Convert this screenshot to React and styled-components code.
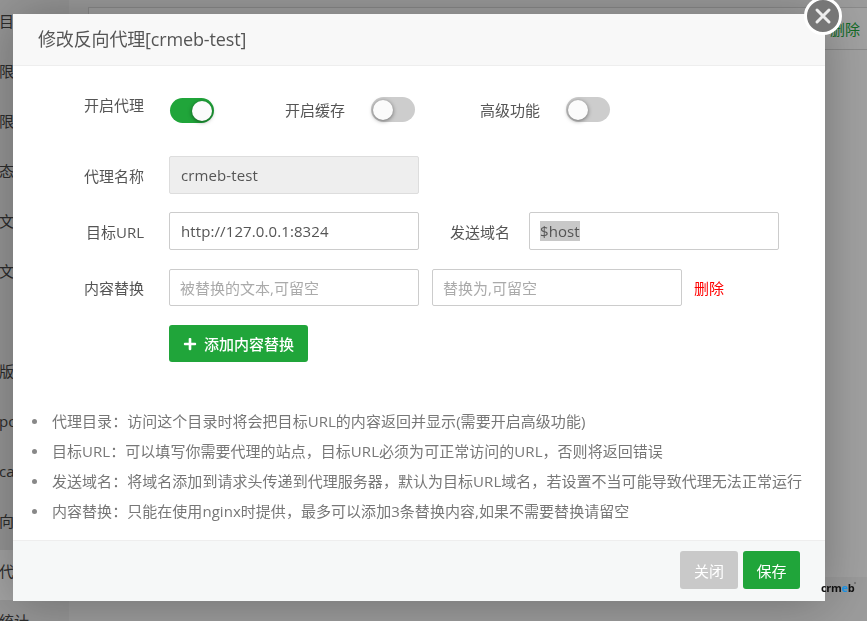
import React from "react";
import styled, { createGlobalStyle } from "styled-components";
import { FaPlus } from "react-icons/fa";

const sideItems = ["目录", "限制", "限制", "态", "文件", "文件", "", "版本", "po", "ca", "向", "代理", "统计"];

const tips = [
  "代理目录：访问这个目录时将会把目标URL的内容返回并显示(需要开启高级功能)",
  "目标URL：可以填写你需要代理的站点，目标URL必须为可正常访问的URL，否则将返回错误",
  "发送域名：将域名添加到请求头传递到代理服务器，默认为目标URL域名，若设置不当可能导致代理无法正常运行",
  "内容替换：只能在使用nginx时提供，最多可以添加3条替换内容,如果不需要替换请留空",
];

function App() {
  return (
    <>
      <GlobalStyle />
      <Page>
        <SideBar>
          {sideItems.map((item, i) => (
            <SideItem key={i} $active={i === 11}>{item}</SideItem>
          ))}
        </SideBar>
        <Main>
          <MainPanel>
            <PanelRow>
              <GreenLink>删除</GreenLink>
            </PanelRow>
          </MainPanel>
        </Main>
      </Page>
      <Shade />
      <Dialog>
        <Header>修改反向代理[crmeb-test]</Header>
        <CloseButton aria-label="关闭">
          <svg width="20" height="20" viewBox="0 0 20 20">
            <path d="M4 4 L16 16 M16 4 L4 16" stroke="#eeeeee" strokeWidth="3" strokeLinecap="round" />
          </svg>
        </CloseButton>
        <Body>
          <SwitchRow>
            <SwitchLabel>开启代理</SwitchLabel>
            <Switch $on />
            <SwitchLabel $gap={71}>开启缓存</SwitchLabel>
            <Switch />
            <SwitchLabel $gap={65}>高级功能</SwitchLabel>
            <Switch />
          </SwitchRow>
          <FormRow $top={33}>
            <FieldLabel>代理名称</FieldLabel>
            <Input $filled value="crmeb-test" readOnly disabled />
          </FormRow>
          <FormRow $top={18}>
            <FieldLabel>目标URL</FieldLabel>
            <Input $filled defaultValue="http://127.0.0.1:8324" />
            <FieldLabel $second>发送域名</FieldLabel>
            <FakeInput>
              <Selected>$host</Selected>
            </FakeInput>
          </FormRow>
          <FormRow $top={19} $short>
            <FieldLabel>内容替换</FieldLabel>
            <Input placeholder="被替换的文本,可留空" />
            <Input $gap placeholder="替换为,可留空" />
            <RemoveLink>删除</RemoveLink>
          </FormRow>
          <AddButton>
            <FaPlus size={14} />
            添加内容替换
          </AddButton>
          <TipList>
            {tips.map((tip) => (
              <li key={tip}>{tip}</li>
            ))}
          </TipList>
        </Body>
        <Footer>
          <FootButton $grey>关闭</FootButton>
          <FootButton>保存</FootButton>
        </Footer>
      </Dialog>
      <Watermark>
        cr<b>m</b><i>e</i>b
      </Watermark>
    </>
  );
}

const GlobalStyle = createGlobalStyle`
  html, body {
    margin: 0;
    padding: 0;
    height: 100%;
    overflow: hidden;
    background: #f2f2f2;
  }
  * {
    box-sizing: border-box;
  }
  body, input, button {
    font-family: "Open Sans", "Noto Sans CJK SC", sans-serif;
    font-size: 15px;
    color: #555;
  }
`;

const Page = styled.div`
  display: flex;
  height: 621px;
  overflow: hidden;
`;

const SideBar = styled.div`
  width: 69px;
  background: #e6e6e6;
`;

const SideItem = styled.div`
  height: 50px;
  line-height: 42px;
  text-indent: -1px;
  color: #444;
  white-space: nowrap;
  background: ${(p) => (p.$active ? "#fafafa" : "transparent")};
`;

const Main = styled.div`
  flex: 1;
  padding-left: 19px;
  background: #eeeeee;
`;

const MainPanel = styled.div`
  height: 570px;
  border-left: 1px solid #d4d4d4;
  background: #f8f8f8;
  margin-top: -1px;
`;

const PanelRow = styled.div`
  margin-top: 8px;
  height: 43px;
  border-top: 1px solid #d4d4d4;
  border-bottom: 1px solid #d4d4d4;
  display: flex;
  justify-content: flex-end;
  align-items: center;
  padding-right: 7px;
`;

const GreenLink = styled.span`
  color: #20a53a;
`;

const Shade = styled.div`
  position: fixed;
  inset: 0;
  background: rgba(0, 0, 0, 0.35);
`;

const Dialog = styled.div`
  position: fixed;
  left: 13px;
  top: 14px;
  width: 812px;
  height: 587px;
  display: flex;
  flex-direction: column;
  background: #fff;
  box-shadow: 1px 1px 50px rgba(0, 0, 0, 0.3);
`;

const Header = styled.div`
  height: 52px;
  flex: none;
  padding-left: 25px;
  line-height: 51px;
  font-size: 18px;
  letter-spacing: -0.15px;
  color: #555;
  background: #f8f8f8;
  border-bottom: 1px solid #eee;
`;

const CloseButton = styled.button`
  position: absolute;
  right: -17px;
  top: -17px;
  width: 38px;
  height: 38px;
  padding: 0;
  display: flex;
  align-items: center;
  justify-content: center;
  border: 3px solid #fff;
  border-radius: 50%;
  background: #777;
`;

const Body = styled.div`
  flex: 1;
  padding-top: 32px;
`;

const SwitchRow = styled.div`
  display: flex;
  align-items: flex-start;
  height: 25px;
  padding-left: 71px;
`;

const SwitchLabel = styled.span`
  flex: none;
  line-height: 16px;
  margin-left: ${(p) => p.$gap || 0}px;
  margin-top: ${(p) => (p.$gap ? "4px" : "-1px")};
  width: ${(p) => (p.$gap ? "60px" : "86px")};
  margin-right: ${(p) => (p.$gap ? "26px" : "0")};
`;

const Switch = styled.span`
  position: relative;
  flex: none;
  width: 44px;
  height: 25px;
  margin-top: ${(p) => (p.$on ? "0" : "-1px")};
  border-radius: 13px;
  background: ${(p) => (p.$on ? "#20a53a" : "#cdcdcd")};
  &::after {
    content: "";
    position: absolute;
    top: 3px;
    left: ${(p) => (p.$on ? "22px" : "2px")};
    width: 20px;
    height: 20px;
    border-radius: 50%;
    background: #fbfbfb;
    box-shadow: 0 1px 4px rgba(0, 0, 0, 0.5);
  }
`;

const FormRow = styled.div`
  display: flex;
  align-items: center;
  margin-top: ${(p) => p.$top}px;
  height: ${(p) => (p.$short ? "37px" : "38px")};
  padding-left: 71px;
`;

const FieldLabel = styled.label`
  flex: none;
  width: 60px;
  margin-right: 25px;
  text-align: right;
  ${(p) => (p.$second ? "margin-left: 31px; margin-right: 19px;" : "")}
`;

const Input = styled.input`
  flex: none;
  width: 250px;
  height: 100%;
  padding: 0 ${(p) => (p.$filled ? "11px" : "10px")};
  margin-left: ${(p) => (p.$gap ? "13px" : "0")};
  border: 1px solid #ccc;
  border-radius: 2px;
  outline: none;
  background: #fff;
  color: #555;
  letter-spacing: 0.1px;
  &:disabled {
    background: #eee;
    border-color: #ddd;
    color: #555;
  }
  &::placeholder {
    color: #aaa;
    letter-spacing: 0;
  }
`;

const FakeInput = styled.div`
  flex: none;
  width: 250px;
  height: 100%;
  padding: 0 10px;
  display: flex;
  align-items: center;
  border: 1px solid #ccc;
  border-radius: 2px;
`;

const Selected = styled.span`
  background: #c8c8c8;
  line-height: 20px;
  letter-spacing: 0.1px;
`;

const RemoveLink = styled.span`
  margin-left: 12px;
  color: #f00;
`;

const AddButton = styled.button`
  display: flex;
  align-items: center;
  gap: 7px;
  margin: 19px 0 0 156px;
  height: 37px;
  width: 139px;
  padding: 0 0 0 14px;
  border: none;
  border-radius: 3px;
  background: #20a53a;
  color: #fff;
  font-weight: 500;
`;

const TipList = styled.ul`
  margin: 44px 0 0;
  padding: 0 0 0 19px;
  list-style: none;
  color: #777;
  letter-spacing: 0.04px;
  li {
    display: flex;
    align-items: center;
    line-height: 30px;
    white-space: nowrap;
  }
  li::before {
    content: "";
    flex: none;
    width: 5px;
    height: 5px;
    margin-right: 15px;
    border-radius: 50%;
    background: #888;
  }
`;

const Footer = styled.div`
  flex: none;
  height: 61px;
  display: flex;
  justify-content: flex-end;
  gap: 5px;
  padding: 10px 25px 0 0;
  background: #f6f8f8;
  border-top: 1px solid #eee;
`;

const FootButton = styled.button`
  width: ${(p) => (p.$grey ? "58px" : "57px")};
  height: 38px;
  border: none;
  border-radius: 3px;
  background: ${(p) => (p.$grey ? "#c9c9c9" : "#20a53a")};
  color: #fff;
`;

const Watermark = styled.div`
  position: fixed;
  left: 821px;
  top: 580px;
  font-size: 11px;
  font-weight: 700;
  letter-spacing: -0.3px;
  color: #111;
  b {
    font-weight: 700;
  }
  i {
    font-style: normal;
    color: #1b8fe0;
  }
  &::after {
    content: "";
    position: absolute;
    right: -2px;
    top: 2px;
    width: 2px;
    height: 2px;
    border-radius: 50%;
    background: #666;
  }
`;

export default App;
